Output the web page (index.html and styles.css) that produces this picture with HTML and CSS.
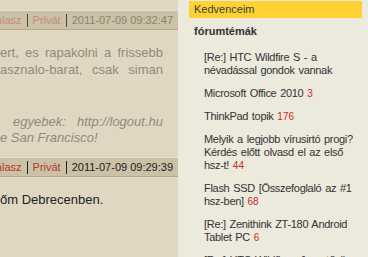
FILE: index.html
```html
<!DOCTYPE html>
<html lang="hu">

<head>
  <meta charset="UTF-8">
  <meta name="viewport" content="width=device-width, initial-scale=1.0">
  <title>Fórum</title>
  <link rel="stylesheet" href="styles.css">
</head>

<body>
  <div class="page">
    <div class="main">
      <div class="post faded">
        <div class="post-head">
          <span class="link">Válasz</span>
          <span class="sep"></span>
          <span class="link">Privát</span>
          <span class="sep"></span>
          <span class="date">2011-07-09 09:32:47</span>
        </div>
        <div class="post-body">
          <div class="line just">ert, es rapakolni a frissebb</div>
          <div class="line just">asznalo-barat, csak siman</div>
          <div class="sig">
            <div class="line just indent">egyebek: http://logout.hu</div>
            <div class="line">e San Francisco!</div>
          </div>
        </div>
      </div>

      <div class="post">
        <div class="post-head">
          <span class="link">Válasz</span>
          <span class="sep"></span>
          <span class="link">Privát</span>
          <span class="sep"></span>
          <span class="date">2011-07-09 09:29:39</span>
        </div>
        <div class="post-body">
          <div class="line">őm Debrecenben.</div>
        </div>
      </div>
    </div>

    <div class="sidebar">
      <div class="fav">Kedvenceim</div>
      <div class="section-title">fórumtémák</div>
      <ul class="topics">
        <li>[Re:] HTC Wildfire S - a névadással gondok vannak</li>
        <li>Microsoft Office 2010 <span class="count">3</span></li>
        <li>ThinkPad topik <span class="count">176</span></li>
        <li>Melyik a legjobb vírusirtó progi? Kérdés előtt olvasd el az első hsz-t! <span class="count">44</span></li>
        <li>Flash SSD [Összefoglaló az #1 hsz-ben] <span class="count">68</span></li>
        <li>[Re:] Zenithink ZT-180 Android Tablet PC <span class="count">6</span></li>
        <li>[Re:] HTC Wildfire - Jogy tűzön</li>
      </ul>
    </div>
  </div>
</body>

</html>
```

FILE: styles.css
```css
body {
  margin: 0;
  background-color: #ece9dd;
  font-family: "Liberation Sans", Arial, sans-serif;
  overflow: hidden;
}

.page {
  display: flex;
  height: 257px;
}

.main {
  width: 178px;
  flex: none;
  background-color: #dfd7c2;
  overflow: hidden;
  padding-top: 10px;
}

.post-head {
  height: 18px;
  display: flex;
  justify-content: flex-end;
  align-items: center;
  padding-right: 5px;
  background-color: #cbc1a6;
  border-top: 1px solid #e7e0cd;
  border-bottom: 1px solid #b2a88e;
  font-size: 11px;
  white-space: nowrap;
}

.post-head .sep {
  height: 13px;
  margin: 0 5px;
  border-left: 1px solid #222;
}

.post-head .link {
  color: #b8362a;
}

.post-head .date {
  color: #222;
}

.post-body {
  padding: 14px 15px 0 0;
  font-size: 13px;
  line-height: 17px;
  color: #222;
}

.line {
  white-space: nowrap;
}

.line.just {
  text-align: justify;
  text-align-last: justify;
  white-space: normal;
}

.line.indent {
  padding-left: 13px;
}

.sig {
  margin-top: 36px;
  line-height: 16px;
  font-style: italic;
}

.faded .post-body {
  color: #8f8a7b;
  padding-bottom: 11px;
}

.faded .post-head .link {
  color: #c78b7d;
}

.faded .post-head .date {
  color: #8a8372;
}

.faded .post-head .sep {
  border-color: #444;
}

.sidebar {
  flex: 1;
  min-width: 0;
  padding: 1px 6px 0 11px;
  font-size: 11px;
  color: #333;
}

.fav {
  height: 17px;
  line-height: 17px;
  padding-left: 5px;
  background-color: #fdd232;
  color: #3a3a3a;
}

.section-title {
  margin: 6px 0 0 5px;
  line-height: 14px;
  font-weight: bold;
}

.topics {
  list-style: none;
  margin: 13px -4px 0 0;
  padding: 0 0 0 15px;
  line-height: 13px;
  letter-spacing: -0.3px;
  word-spacing: 1px;
}

.topics li {
  margin-bottom: 10px;
}

.count {
  color: #cc2b1d;
  font-size: 10px;
  letter-spacing: 0;
}
```
